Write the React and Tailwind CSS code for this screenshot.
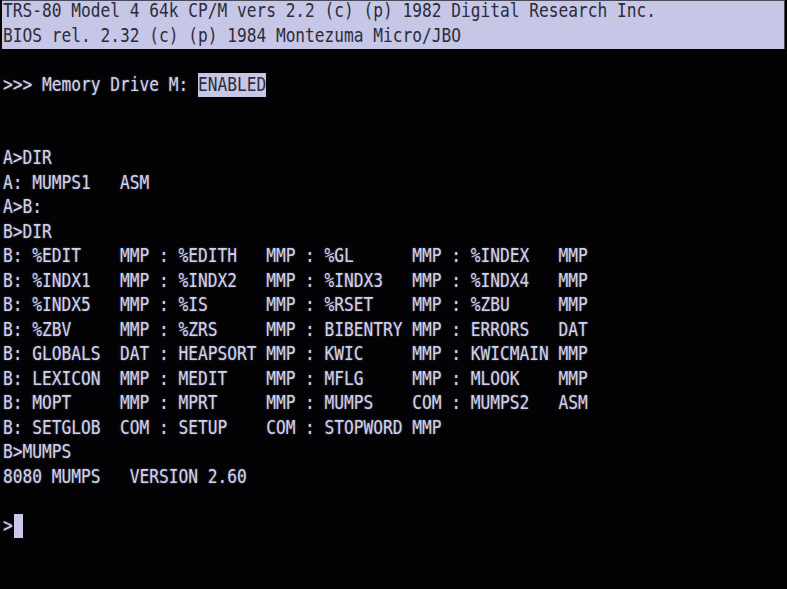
import React from "react";

// CP/M session on a TRS-80 Model 4, one row per screen line
const header = [
  "TRS-80 Model 4 64k CP/M vers 2.2 (c) (p) 1982 Digital Research Inc.",
  "BIOS rel. 2.32 (c) (p) 1984 Montezuma Micro/JBO",
];

const session = [
  "",
  null, // memory drive line
  "",
  "",
  "A>DIR",
  "A: MUMPS1   ASM",
  "A>B:",
  "B>DIR",
  "B: %EDIT    MMP : %EDITH   MMP : %GL      MMP : %INDEX   MMP",
  "B: %INDX1   MMP : %INDX2   MMP : %INDX3   MMP : %INDX4   MMP",
  "B: %INDX5   MMP : %IS      MMP : %RSET    MMP : %ZBU     MMP",
  "B: %ZBV     MMP : %ZRS     MMP : BIBENTRY MMP : ERRORS   DAT",
  "B: GLOBALS  DAT : HEAPSORT MMP : KWIC     MMP : KWICMAIN MMP",
  "B: LEXICON  MMP : MEDIT    MMP : MFLG     MMP : MLOOK    MMP",
  "B: MOPT     MMP : MPRT     MMP : MUMPS    COM : MUMPS2   ASM",
  "B: SETGLOB  COM : SETUP    COM : STOPWORD MMP",
  "B>MUMPS",
  "8080 MUMPS   VERSION 2.60",
  "",
];

const Glyphs = ({ children }) => (
  <span className="inline-block scale-y-[1.22] whitespace-pre">{children}</span>
);

const Row = ({ children }) => (
  <div className="h-[24.5px] flex items-center whitespace-pre">{children}</div>
);

export default function App() {
  return (
    <div
      className="w-[787px] h-[589px] overflow-hidden bg-[#030305] text-[#d2d2ee] text-[16.2px] [text-shadow:0_0_2px_rgba(200,200,240,0.45)]"
      style={{ fontFamily: '"DejaVu Sans Mono", "Liberation Mono", monospace' }}
    >
      {/* status band */}
      <div className="h-[49px] mx-[2px] bg-[#c6c6e6] border-t border-r border-[#4a4a5a] text-[#2c2c3a] pl-[1px] pt-[-2px] [text-shadow:none]">
        <div className="-mt-[2px]">
          {header.map((line, i) => (
            <Row key={i}>
              <Glyphs>{line}</Glyphs>
            </Row>
          ))}
        </div>
      </div>

      <div className="pl-[3px] -mt-[1px]">
        {session.map((line, i) =>
          line === null ? (
            <Row key={i}>
              <Glyphs>{">>> Memory Drive M: "}</Glyphs>
              <span className="h-[24px] flex items-center bg-[#c6c6e6] text-[#2c2c3a] [text-shadow:none]">
                <Glyphs>ENABLED</Glyphs>
              </span>
            </Row>
          ) : (
            <Row key={i}>
              <Glyphs>{line}</Glyphs>
            </Row>
          )
        )}
        <Row>
          <Glyphs>{">"}</Glyphs>
          <span className="w-[9px] h-[24px] ml-[1px] bg-[#c8c8ea]" />
        </Row>
      </div>
    </div>
  );
}
